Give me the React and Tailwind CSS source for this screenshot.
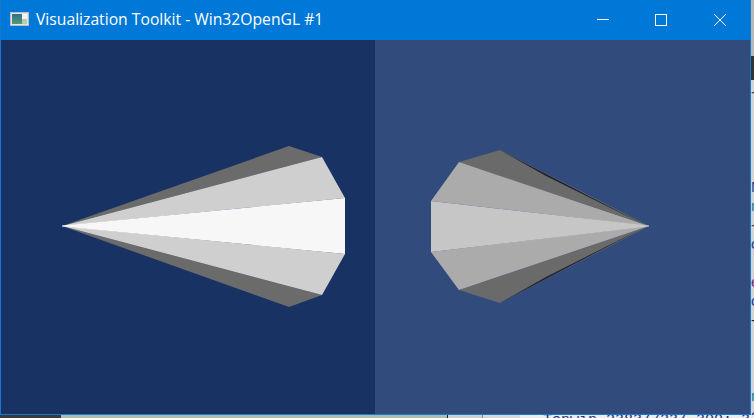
function Cone({ width, height, viewBox, faces }) {
  return (
    <svg width={width} height={height} viewBox={viewBox} className="block shrink-0">
      {faces.map((f, i) => (
        <polygon key={i} points={f.points} fill={f.fill} />
      ))}
    </svg>
  );
}

// points are in page coordinates, the viewBox crops them
const leftFaces = [
  { fill: "#6b6b6b", points: "62,226 289,146 322,157" },
  { fill: "#6b6b6b", points: "62,226 322,295 289,307" },
  { fill: "#cfcfcf", points: "62,226 322,157 345,198" },
  { fill: "#cfcfcf", points: "62,226 345,254 322,295" },
  { fill: "#f7f7f7", points: "62,225.6 345,198 345,254 62,226.4" },
];

const rightFaces = [
  { fill: "#6a6a6a", points: "649,226 500,150 459,162" },
  { fill: "#6a6a6a", points: "649,226 459,290 500,303" },
  { fill: "#ababab", points: "649,226 459,162 431,201" },
  { fill: "#ababab", points: "649,226 431,252 459,290" },
  { fill: "#c6c6c6", points: "649,225.6 431,201 431,252 649,226.4" },
  { fill: "#1f2430", points: "500,150 647,226 545,175.5" },
  { fill: "#1f2430", points: "500,303 647,226 545,277.5" },
];

// what shows of the editor behind the window, one line per row
const editorRows = [
  { ch: "+", cls: "text-[#7a1f6b]" },
  { ch: "" },
  { ch: "" },
  { ch: "" },
  { ch: "" },
  { ch: "M", cls: "text-[#1f3f9f]" },
  { ch: "r", cls: "text-[#1f7f9f]" },
  { ch: "+", cls: "text-[#7a1f6b]" },
  { ch: "c", cls: "text-[#1f3f9f]" },
  { ch: "" },
  { ch: "e", cls: "text-[#7a1f8f]" },
  { ch: "c", cls: "text-[#1f3f9f]" },
  { ch: "-", cls: "text-[#1a1a6a]" },
  { ch: "" },
  { ch: "" },
  { ch: "" },
  { ch: "r", cls: "text-[#1f7f9f]" },
  { ch: "c", cls: "text-[#1f3f9f]" },
];

export default function App() {
  return (
    <div className="w-[754px] h-[418px] overflow-hidden flex flex-col bg-[#d4d4d4] font-['Open_Sans',sans-serif]">
      <div className="flex h-[415px] shrink-0">
        {/* Window */}
        <div className="w-[751px] h-[415px] flex flex-col border border-[#1579d8] border-t-0 shrink-0">
          <div className="h-[40px] bg-[#0078d7] flex items-center shrink-0">
            <svg width="19" height="14" viewBox="0 0 19 14" className="ml-[9px] mb-[2px] shrink-0">
              <defs>
                <linearGradient id="icon-g" x1="0" y1="0" x2="0" y2="1">
                  <stop offset="0" stopColor="#2f6f8f" />
                  <stop offset="1" stopColor="#4f9f6f" />
                </linearGradient>
              </defs>
              <rect x="0.5" y="0.5" width="18" height="13" fill="#e6e6e6" stroke="#b4c0c8" />
              <rect x="2" y="2" width="10" height="10" fill="url(#icon-g)" />
              <rect x="12" y="2" width="5" height="5" fill="#f2f2f2" />
              <rect x="12" y="7" width="5" height="5" fill="#b4ccb0" />
            </svg>
            <span className="ml-[7px] text-white text-[15.7px] leading-none whitespace-nowrap">Visualization Toolkit - Win32OpenGL #1</span>
            <div className="ml-auto flex items-center h-full">
              <svg width="12" height="12" viewBox="0 0 12 12" className="mr-[46px]">
                <path d="M0 5.5H12" stroke="#fff" strokeWidth="1" />
              </svg>
              <svg width="12" height="12" viewBox="0 0 12 12" className="mr-[47px]">
                <rect x="0.5" y="0.5" width="11" height="11" fill="none" stroke="#fff" strokeWidth="1" />
              </svg>
              <svg width="12" height="12" viewBox="0 0 12 12" className="mr-[24px]">
                <path d="M0 0L12 12M12 0L0 12" stroke="#fff" strokeWidth="1" />
              </svg>
            </div>
          </div>
          <div className="flex flex-1 min-h-0">
            <div className="w-[374px] bg-[#183263] pl-[61px] pt-[106px]">
              <Cone width={283} height={161} viewBox="62 146 283 161" faces={leftFaces} />
            </div>
            <div className="flex-1 bg-[#324b7d] pl-[56px] pt-[110px]">
              <Cone width={218} height={153} viewBox="431 150 218 153" faces={rightFaces} />
            </div>
          </div>
        </div>
        {/* Editor peeking out behind the window */}
        <div className="flex-1 min-w-0 overflow-hidden flex flex-col">
          <div className="h-[56px] bg-[#b8b8b8] shrink-0" />
          <div className="h-[24px] bg-[#333333] shrink-0" />
          <div className="pt-[2px] font-['Liberation_Sans',sans-serif] text-[15px]">
            {editorRows.map((r, i) => (
              <div key={i} className={`h-[19px] leading-[19px] ${r.cls || ""}`}>{r.ch}</div>
            ))}
          </div>
        </div>
      </div>
      <div className="h-[3px] flex shrink-0 overflow-hidden">
        <div className="w-[61px] bg-[#3a3a3a]" />
        <div className="w-[386px] bg-[#a9c0a4]" />
        <div className="w-[1px] bg-[#222222]" />
        <div className="w-[34px] bg-[#cfcfcf]" />
        <div className="w-[1px] bg-[#8a8a8a]" />
        <div className="w-[37px] bg-[#d8d8d8]" />
        <div className="flex-1 bg-[#ececec] pl-[23px] overflow-hidden">
          <div className="-mt-[3px] text-[15px] leading-[18px] text-[#1c2f7a] whitespace-nowrap font-['Liberation_Mono',monospace]">Tenwin 2383/723/ 300; 3</div>
        </div>
      </div>
    </div>
  );
}
